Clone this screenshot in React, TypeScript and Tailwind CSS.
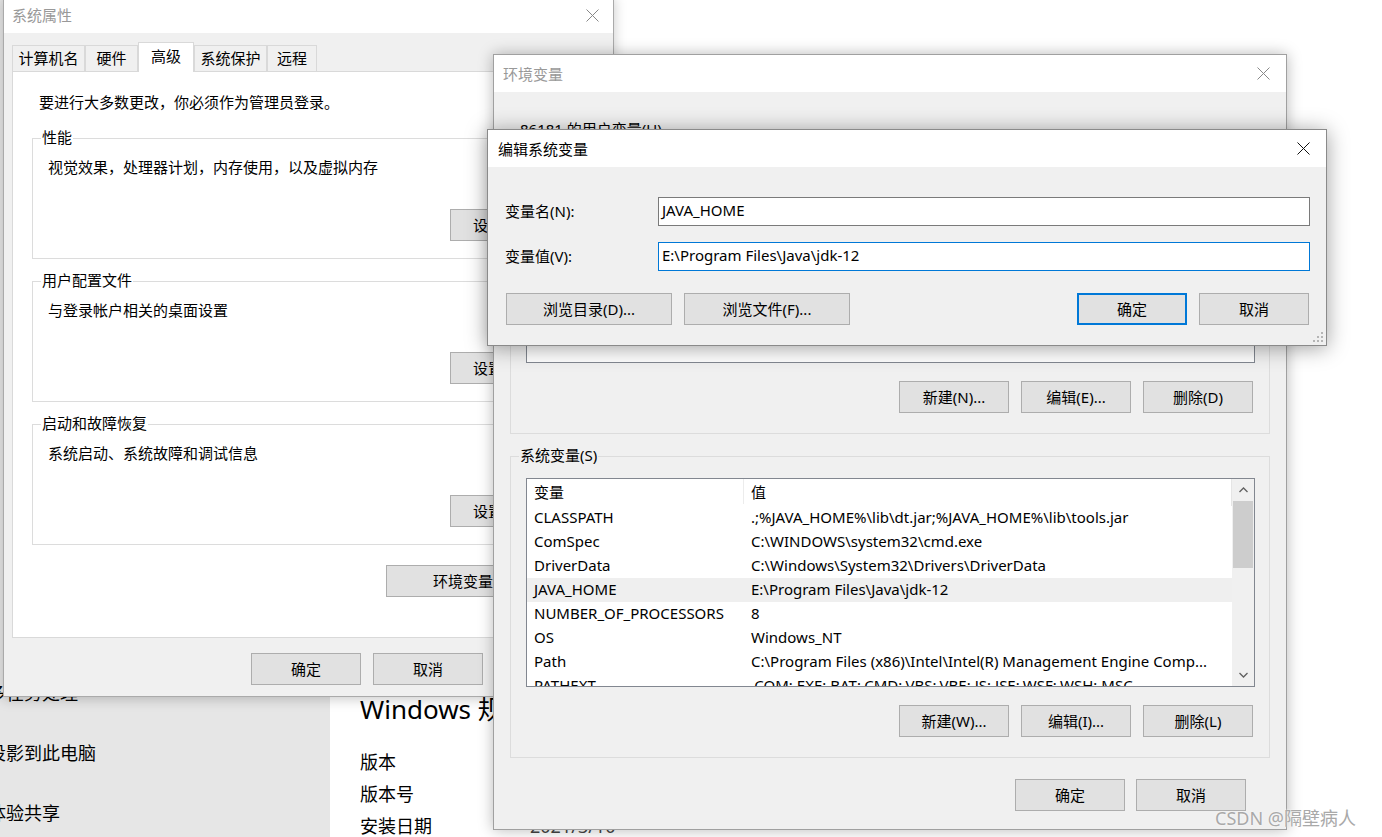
import React from "react";

const sysRows: [string, string][] = [
  ["CLASSPATH", ".;%JAVA_HOME%\\lib\\dt.jar;%JAVA_HOME%\\lib\\tools.jar"],
  ["ComSpec", "C:\\WINDOWS\\system32\\cmd.exe"],
  ["DriverData", "C:\\Windows\\System32\\Drivers\\DriverData"],
  ["JAVA_HOME", "E:\\Program Files\\Java\\jdk-12"],
  ["NUMBER_OF_PROCESSORS", "8"],
  ["OS", "Windows_NT"],
  ["Path", "C:\\Program Files (x86)\\Intel\\Intel(R) Management Engine Comp..."],
  ["PATHEXT", ".COM;.EXE;.BAT;.CMD;.VBS;.VBE;.JS;.JSE;.WSF;.WSH;.MSC"],
];

const userRows: [string, string][] = [
  ["OneDrive", "C:\\Users\\86181\\OneDrive"],
  ["Path", "C:\\Users\\86181\\AppData\\Local\\Microsoft\\WindowsApps;"],
  ["TEMP", "C:\\Users\\86181\\AppData\\Local\\Temp"],
  ["TMP", "C:\\Users\\86181\\AppData\\Local\\Temp"],
];

function CloseX({ className }: { className: string }) {
  return (
    <svg width="13" height="13" viewBox="0 0 13 13" className={className}>
      <path d="M0.5 0.5L12.5 12.5M12.5 0.5L0.5 12.5" stroke="currentColor" strokeWidth="1" fill="none" />
    </svg>
  );
}

function Btn({
  children,
  className = "",
  primary = false,
}: {
  children: React.ReactNode;
  className?: string;
  primary?: boolean;
}) {
  return (
    <div
      className={`flex h-[32px] shrink-0 items-center whitespace-nowrap bg-[#e1e1e1] pb-[1px] ${
        primary ? "border-2 border-[#0078d7]" : "border border-[#adadad]"
      } ${className}`}
    >
      {children}
    </div>
  );
}

function Chevron({ up }: { up?: boolean }) {
  return (
    <svg width="9" height="6" viewBox="0 0 9 6">
      <path
        d={up ? "M0.5 5L4.5 1L8.5 5" : "M0.5 1L4.5 5L8.5 1"}
        stroke="#606060"
        strokeWidth="1.3"
        fill="none"
      />
    </svg>
  );
}

function Scrollbar() {
  return (
    <div className="flex w-[22px] shrink-0 flex-col bg-[#f0f0f0]">
      <div className="flex h-[22px] items-center justify-center">
        <Chevron up />
      </div>
      <div className="mx-[1px] h-[67px] bg-[#cdcdcd]" />
      <div className="flex-1" />
      <div className="flex h-[22px] items-center justify-center">
        <Chevron />
      </div>
    </div>
  );
}

function VarList({
  rows,
  selected,
  scroll = false,
  className,
}: {
  rows: [string, string][];
  selected?: string;
  scroll?: boolean;
  className: string;
}) {
  return (
    <div className={`flex overflow-hidden border border-[#828790] bg-white ${className}`}>
      <div className="min-w-0 flex-1">
        <div className="flex h-[27px] items-center border-r border-[#e5e5e5] pb-[2px]">
          <div className="flex h-full w-[217px] items-center border-r border-[#ececec] pl-[7px]">变量</div>
          <div className="pl-[7px]">值</div>
        </div>
        {rows.map(([k, v]) => (
          <div
            key={k}
            className={`flex h-[24px] items-center pb-[2px] ${k === selected ? "bg-[#efefef]" : ""}`}
          >
            <div className="w-[217px] shrink-0 overflow-hidden whitespace-nowrap pl-[7px]">{k}</div>
            <div className="min-w-0 flex-1 overflow-hidden whitespace-nowrap pl-[7px]">{v}</div>
          </div>
        ))}
      </div>
      {scroll && <Scrollbar />}
    </div>
  );
}

function Group({
  label,
  bg,
  className,
  children,
}: {
  label: string;
  bg: string;
  className: string;
  children?: React.ReactNode;
}) {
  return (
    <div className={`relative shrink-0 border border-[#dcdcdc] ${className}`}>
      <span className={`absolute -top-[12px] left-[8px] px-[1px] leading-[20px] ${bg}`}>{label}</span>
      {children}
    </div>
  );
}

function SettingsBackdrop() {
  return (
    <div className="flex h-full w-full">
      <aside className="w-[330px] shrink-0 bg-[#e6e6e6] pt-[663px] text-[18px]">
        {["多任务处理", "投影到此电脑", "体验共享"].map((t) => (
          <div key={t} className="-ml-[12px] flex h-[60px] items-center whitespace-nowrap">
            {t}
          </div>
        ))}
      </aside>
      <main className="flex-1 bg-white pl-[30px] pt-[691px]">
        <h1 className="text-[26px] leading-[36px]">Windows 规格</h1>
        <div className="mt-[19px] text-[18px]">
          {[
            ["版本", "专业版"],
            ["版本号", "20H2"],
            ["安装日期", "2021/3/10"],
          ].map(([k, v]) => (
            <div key={k} className="flex h-[32px] items-center">
              <span className="w-[170px]">{k}</span>
              <span className="text-[#444]">{v}</span>
            </div>
          ))}
        </div>
      </main>
    </div>
  );
}

function SystemProperties() {
  const tabs = [
    { t: "计算机名", w: "w-[73px]" },
    { t: "硬件", w: "w-[53px]" },
    { t: "高级", w: "w-[56px]", on: true },
    { t: "系统保护", w: "w-[73px]" },
    { t: "远程", w: "w-[50px]" },
  ];
  const groups = [
    { label: "性能", desc: "视觉效果，处理器计划，内存使用，以及虚拟内存", btn: "设置(S)..." },
    { label: "用户配置文件", desc: "与登录帐户相关的桌面设置", btn: "设置(E)..." },
    { label: "启动和故障恢复", desc: "系统启动、系统故障和调试信息", btn: "设置(T)..." },
  ];
  return (
    <div className="absolute left-[3px] top-[-4px] flex h-[701px] w-[611px] flex-col border border-[#aaaaaa] bg-[#f0f0f0] shadow-[0_2px_12px_rgba(0,0,0,0.22)]">
      <div className="flex h-[36px] shrink-0 items-center justify-between bg-white pl-[8px] pr-[14px] text-[#999999]">
        <span>系统属性</span>
        <CloseX className="text-[#888888]" />
      </div>
      <div className="flex flex-1 flex-col px-[8px]">
        <div className="mt-[10px] flex h-[28px] items-end">
          {tabs.map((tab) => (
            <div
              key={tab.t}
              className={`flex items-center justify-center whitespace-nowrap border border-b-0 ${tab.w} ${
                tab.on
                  ? "relative z-10 -mb-px h-[30px] border-[#d9d9d9] bg-white pb-[4px]"
                  : "h-[26px] border-[#d9d9d9] bg-[#f0f0f0] pb-[1px]"
              }`}
            >
              {tab.t}
            </div>
          ))}
        </div>
        <div className="flex h-[567px] flex-col border border-[#d9d9d9] bg-white">
          <p className="pl-[26px] pt-[20px]">要进行大多数更改，你必须作为管理员登录。</p>
          <div className="ml-[19px] mt-[26px] flex w-[554px] flex-col gap-[22px]">
            {groups.map((g) => (
              <Group key={g.label} label={g.label} bg="bg-white" className="h-[121px]">
                <p className="pl-[15px] pt-[18px]">{g.desc}</p>
                <div className="mt-[32px] flex justify-end pr-[11px]">
                  <Btn className="w-[124px] pl-[22px]">{g.btn}</Btn>
                </div>
              </Group>
            ))}
          </div>
          <div className="ml-[19px] mt-[20px] flex w-[554px] justify-end">
            <Btn className="w-[200px] pl-[46px]">环境变量(N)...</Btn>
          </div>
        </div>
        <div className="mt-[15px] flex justify-end gap-[12px]">
          <Btn className="w-[110px] justify-center">确定</Btn>
          <Btn className="w-[110px] justify-center">取消</Btn>
          <Btn className="w-[110px] justify-center text-[#a0a0a0]">应用(A)</Btn>
        </div>
      </div>
    </div>
  );
}

function EnvironmentVariables() {
  return (
    <div className="absolute left-[493px] top-[54px] flex h-[776px] w-[794px] flex-col border border-[#a0a0a0] bg-[#f0f0f0] shadow-[0_0_14px_rgba(0,0,0,0.28)]">
      <div className="flex h-[37px] shrink-0 items-center justify-between bg-white pl-[9px] pr-[16px] text-[#999999]">
        <span>环境变量</span>
        <CloseX className="text-[#888888]" />
      </div>
      <div className="flex flex-1 flex-col px-[16px]">
        <Group label="86181 的用户变量(U)" bg="bg-[#f0f0f0]" className="mt-[38px] h-[304px]">
          <VarList rows={userRows} className="ml-[15px] mr-[14px] mt-[20px] h-[212px]" />
          <div className="mr-[16px] mt-[18px] flex justify-end gap-[12px]">
            <Btn className="w-[110px] justify-center">新建(N)...</Btn>
            <Btn className="w-[110px] justify-center">编辑(E)...</Btn>
            <Btn className="w-[110px] justify-center">删除(D)</Btn>
          </div>
        </Group>
        <Group label="系统变量(S)" bg="bg-[#f0f0f0]" className="mt-[22px] h-[302px]">
          <VarList
            rows={sysRows}
            selected="JAVA_HOME"
            scroll
            className="ml-[15px] mr-[14px] mt-[21px] h-[209px]"
          />
          <div className="mr-[16px] mt-[18px] flex justify-end gap-[12px]">
            <Btn className="w-[110px] justify-center">新建(W)...</Btn>
            <Btn className="w-[110px] justify-center">编辑(I)...</Btn>
            <Btn className="w-[110px] justify-center">删除(L)</Btn>
          </div>
        </Group>
        <div className="mt-[21px] flex justify-end gap-[11px] pr-[24px]">
          <Btn className="w-[110px] justify-center">确定</Btn>
          <Btn className="w-[110px] justify-center">取消</Btn>
        </div>
      </div>
    </div>
  );
}

function ResizeGrip() {
  return (
    <svg width="10" height="10" viewBox="0 0 10 10" className="absolute bottom-[3px] right-[3px]">
      {[
        [8, 0],
        [4, 4],
        [8, 4],
        [0, 8],
        [4, 8],
        [8, 8],
      ].map(([x, y]) => (
        <rect key={`${x}-${y}`} x={x} y={y} width="2" height="2" fill="#b5b5b5" />
      ))}
    </svg>
  );
}

function EditSystemVariable() {
  return (
    <div className="absolute left-[487px] top-[129px] flex h-[217px] w-[840px] flex-col border border-[#8a8a8a] bg-[#f0f0f0] shadow-[0_2px_20px_rgba(0,0,0,0.38)]">
      <div className="flex h-[37px] shrink-0 items-center justify-between bg-white pl-[10px] pr-[16px]">
        <span>编辑系统变量</span>
        <CloseX className="text-[#111111]" />
      </div>
      <div className="flex flex-1 flex-col pl-[17px] pr-[16px]">
        <div className="mt-[30px] flex h-[29px] items-center">
          <span className="w-[153px] shrink-0 pb-[1px]">变量名(N):</span>
          <div className="flex h-full flex-1 items-center border border-[#7a7a7a] bg-white pb-[3px] pl-[3px]">
            JAVA_HOME
          </div>
        </div>
        <div className="mt-[16px] flex h-[29px] items-center">
          <span className="w-[153px] shrink-0 pb-[1px]">变量值(V):</span>
          <div className="flex h-full flex-1 items-center border border-[#0078d7] bg-white pb-[3px] pl-[3px]">
            {"E:\\Program Files\\Java\\jdk-12"}
          </div>
        </div>
        <div className="mt-[22px] flex items-center gap-[12px] pl-[1px] pr-[1px]">
          <Btn className="w-[166px] justify-center">浏览目录(D)...</Btn>
          <Btn className="w-[166px] justify-center">浏览文件(F)...</Btn>
          <Btn primary className="ml-auto w-[110px] justify-center">
            确定
          </Btn>
          <Btn className="w-[110px] justify-center">取消</Btn>
        </div>
      </div>
      <ResizeGrip />
    </div>
  );
}

export default function App() {
  return (
    <div className="relative h-[837px] w-[1382px] overflow-hidden bg-white font-['Noto_Sans','Noto_Sans_CJK_SC',sans-serif] text-[15px] leading-[20px] text-black">
      <SettingsBackdrop />
      <SystemProperties />
      <EnvironmentVariables />
      <EditSystemVariable />
      <div className="absolute left-[1215px] top-[807px] whitespace-nowrap text-[18px] leading-[22px] text-[#a9a9a9] [text-shadow:0_0_2px_#ffffff]">
        CSDN @隔壁病人
      </div>
    </div>
  );
}
